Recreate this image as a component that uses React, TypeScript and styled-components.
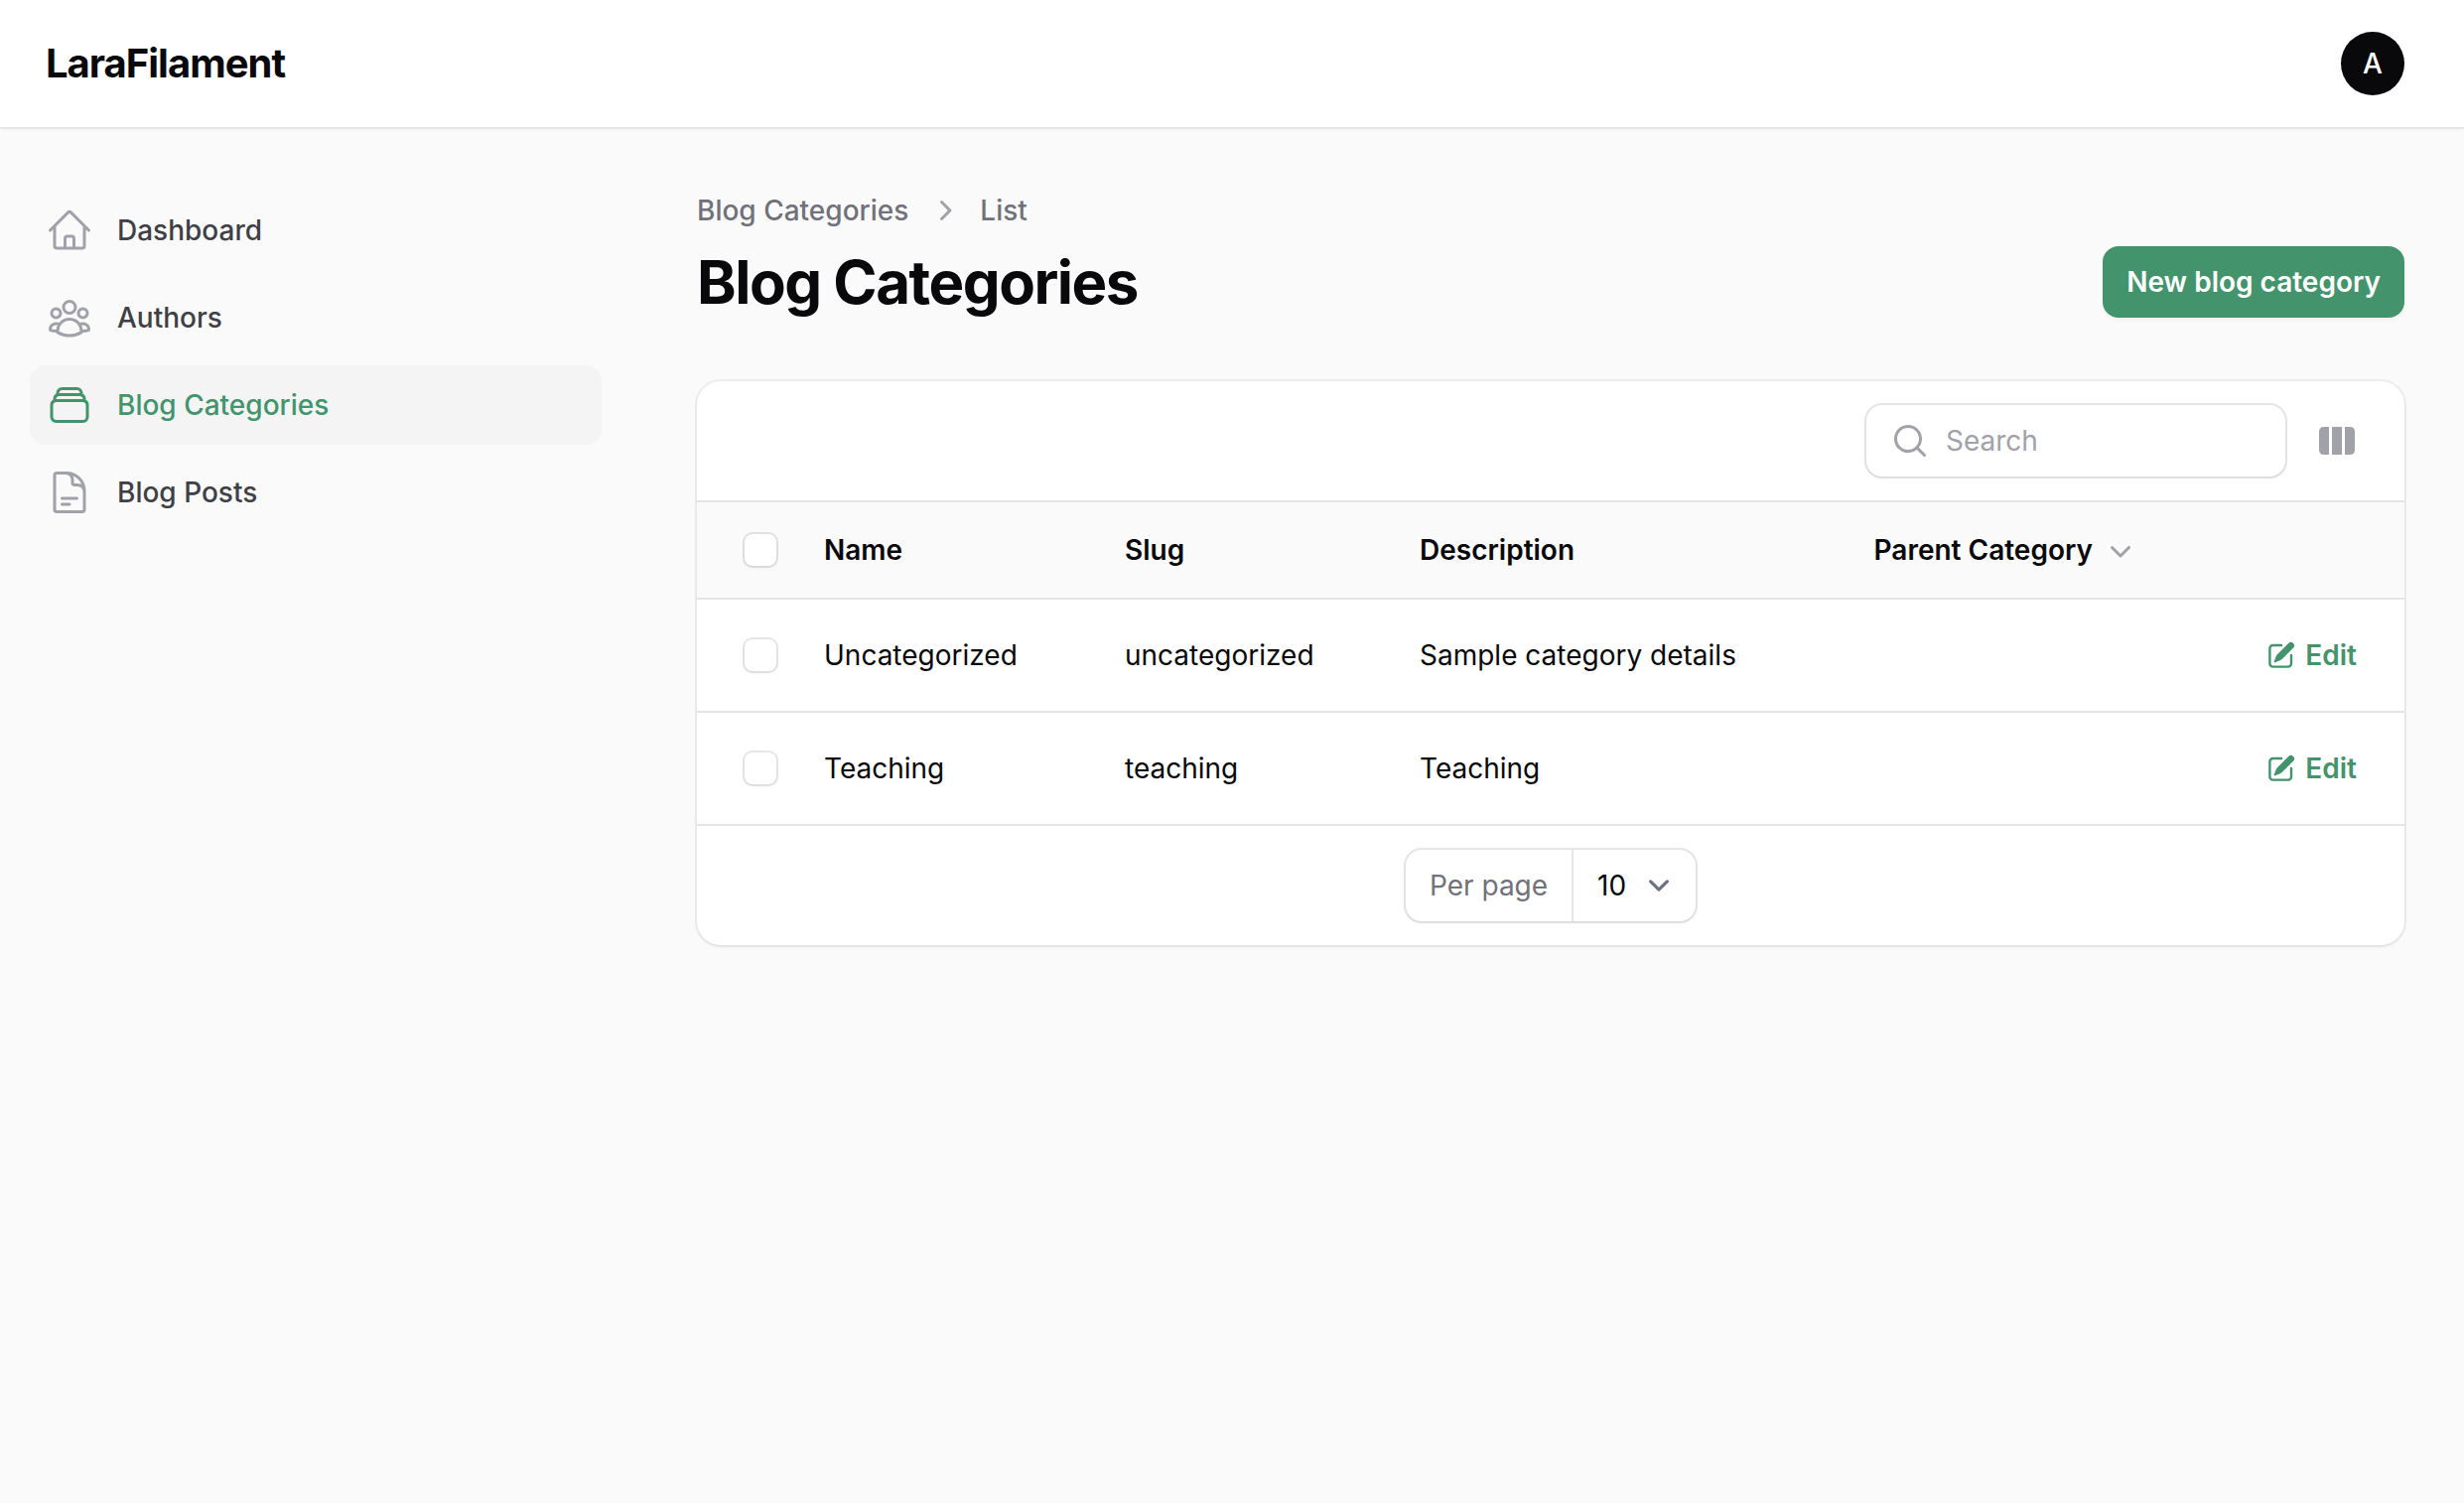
import React from "react";
import styled, { createGlobalStyle, css } from "styled-components";
import {
  HiOutlineHome,
  HiOutlineUserGroup,
  HiOutlineRectangleStack,
  HiOutlineDocumentText,
  HiMiniChevronRight,
  HiMiniChevronDown,
  HiMiniMagnifyingGlass,
  HiMiniViewColumns,
  HiMiniPencilSquare,
} from "react-icons/hi2";

const color = {
  primary: "#43936c",
  ink: "#09090b",
  text: "#3f3f46",
  muted: "#71717a",
  faint: "#a1a1aa",
  line: "#e4e4e5",
  page: "#fafafa",
  active: "#f4f4f4",
};

const smallShadow = "0 2px 4px 0 rgba(0, 0, 0, 0.05)";
const ring = (alpha: number) => `0 0 0 2px rgba(9, 9, 11, ${alpha})`;

const GlobalStyle = createGlobalStyle`
  *, *::before, *::after { box-sizing: border-box; }
  body {
    margin: 0;
    background: ${color.page};
    color: ${color.ink};
    font-family: Inter, "Liberation Sans", sans-serif;
    font-size: 28px;
    line-height: 40px;
    -webkit-font-smoothing: antialiased;
  }
  svg { display: block; flex-shrink: 0; }
  button, input { font: inherit; border: 0; padding: 0; margin: 0; background: none; }
`;

const Page = styled.div`
  display: flex;
  flex-direction: column;
  height: 1514px;
  overflow: hidden;
`;

const Topbar = styled.header`
  display: flex;
  align-items: center;
  justify-content: space-between;
  height: 128px;
  flex-shrink: 0;
  padding: 0 60px 0 46px;
  background: #fff;
  box-shadow: ${ring(0.05)}, ${smallShadow};
`;

const Brand = styled.div`
  font-size: 40px;
  line-height: 40px;
  font-weight: 700;
  letter-spacing: -0.025em;
`;

const Avatar = styled.div`
  display: flex;
  align-items: center;
  justify-content: center;
  width: 64px;
  height: 64px;
  border-radius: 50%;
  background: ${color.ink};
  color: #fff;
  font-weight: 500;
`;

const Body = styled.div`
  display: flex;
  flex: 1;
`;

const Sidebar = styled.nav`
  display: flex;
  flex-direction: column;
  gap: 8px;
  width: 638px;
  flex-shrink: 0;
  padding: 64px 32px 64px 30px;
`;

const NavItem = styled.a<{ $active?: boolean }>`
  display: flex;
  align-items: center;
  gap: 24px;
  height: 80px;
  padding: 16px;
  border-radius: 16px;
  font-weight: 500;
  color: ${color.text};
  svg {
    width: 48px;
    height: 48px;
    color: ${color.faint};
  }
  ${(p) =>
    p.$active &&
    css`
      background: ${color.active};
      color: ${color.primary};
      svg {
        color: ${color.primary};
      }
    `}
`;

const Main = styled.main`
  display: flex;
  flex-direction: column;
  gap: 64px;
  flex: 1;
  padding: 64px 60px 64px 64px;
`;

const PageHeader = styled.div`
  display: flex;
  align-items: flex-end;
  justify-content: space-between;
`;

const Breadcrumbs = styled.div`
  display: flex;
  align-items: center;
  gap: 16px;
  margin-bottom: 16px;
  font-weight: 500;
  color: ${color.muted};
  svg {
    width: 40px;
    height: 40px;
    color: ${color.faint};
  }
`;

const Title = styled.h1`
  margin: 0;
  font-size: 60px;
  line-height: 72px;
  font-weight: 700;
  letter-spacing: -0.025em;
`;

const PrimaryButton = styled.button`
  height: 72px;
  padding: 0 24px;
  border-radius: 16px;
  background: ${color.primary};
  color: #fff;
  font-weight: 600;
  box-shadow: ${smallShadow};
`;

const Card = styled.section`
  border-radius: 24px;
  background: #fff;
  box-shadow: ${ring(0.05)}, ${smallShadow};
`;

const Toolbar = styled.div`
  display: flex;
  align-items: center;
  justify-content: flex-end;
  gap: 32px;
  height: 120px;
  padding: 24px 48px;
  color: ${color.faint};
  > svg {
    width: 40px;
    height: 40px;
  }
`;

const SearchBox = styled.label`
  display: flex;
  align-items: center;
  gap: 16px;
  width: 422px;
  height: 72px;
  padding-left: 24px;
  border-radius: 16px;
  box-shadow: ${ring(0.1)}, ${smallShadow};
  svg {
    width: 40px;
    height: 40px;
  }
`;

const SearchInput = styled.input`
  flex: 1;
  min-width: 0;
  outline: none;
  &::placeholder {
    color: ${color.faint};
    opacity: 1;
  }
`;

const Row = styled.div<{ $head?: boolean }>`
  display: grid;
  grid-template-columns: 104px 303px 297px 457.5px 1fr;
  align-items: center;
  height: ${(p) => (p.$head ? 98 : 114)}px;
  border-top: 2px solid ${color.line};
  background: ${(p) => (p.$head ? color.page : "transparent")};
  font-weight: ${(p) => (p.$head ? 600 : 400)};
`;

const Cell = styled.div`
  display: flex;
  align-items: center;
  gap: 8px;
  padding-left: 24px;
  white-space: nowrap;
  svg {
    width: 40px;
    height: 40px;
    color: ${color.faint};
  }
`;

const CheckCell = styled.div`
  padding-left: 48px;
`;

const Checkbox = styled.div`
  width: 32px;
  height: 32px;
  border-radius: 8px;
  background: #fff;
  box-shadow: ${ring(0.1)}, ${smallShadow};
`;

const EditCell = styled.div`
  display: flex;
  justify-content: flex-end;
  padding-right: 48px;
`;

const EditLink = styled.a`
  display: flex;
  align-items: center;
  gap: 8px;
  font-weight: 600;
  color: ${color.primary};
  svg {
    width: 32px;
    height: 32px;
  }
`;

const Footer = styled.div`
  display: flex;
  align-items: center;
  justify-content: center;
  height: 122px;
  border-top: 2px solid ${color.line};
`;

const PerPage = styled.div`
  display: flex;
  width: 292px;
  height: 72px;
  border-radius: 16px;
  box-shadow: ${ring(0.1)}, ${smallShadow};
`;

const PerPageLabel = styled.div`
  display: flex;
  align-items: center;
  width: 169px;
  padding-left: 24px;
  border-right: 2px solid ${color.line};
  color: ${color.muted};
`;

const PerPageValue = styled.div`
  display: flex;
  align-items: center;
  justify-content: space-between;
  flex: 1;
  padding: 0 16px 0 24px;
`;

const Caret = () => (
  <svg width="42" height="42" viewBox="0 0 20 20" fill="none">
    <path d="M6 8l4 4 4-4" stroke="#6b7280" strokeWidth="1.5" strokeLinecap="round" strokeLinejoin="round" />
  </svg>
);

const navItems = [
  { label: "Dashboard", Icon: HiOutlineHome },
  { label: "Authors", Icon: HiOutlineUserGroup },
  { label: "Blog Categories", Icon: HiOutlineRectangleStack, active: true },
  { label: "Blog Posts", Icon: HiOutlineDocumentText },
];

const categories = [
  { name: "Uncategorized", slug: "uncategorized", description: "Sample category details" },
  { name: "Teaching", slug: "teaching", description: "Teaching" },
];

export default function App() {
  return (
    <Page>
      <GlobalStyle />
      <Topbar>
        <Brand>LaraFilament</Brand>
        <Avatar>A</Avatar>
      </Topbar>
      <Body>
        <Sidebar>
          {navItems.map(({ label, Icon, active }) => (
            <NavItem key={label} $active={active}>
              <Icon />
              {label}
            </NavItem>
          ))}
        </Sidebar>
        <Main>
          <PageHeader>
            <div>
              <Breadcrumbs>
                <span>Blog Categories</span>
                <HiMiniChevronRight />
                <span>List</span>
              </Breadcrumbs>
              <Title>Blog Categories</Title>
            </div>
            <PrimaryButton>New blog category</PrimaryButton>
          </PageHeader>
          <Card>
            <Toolbar>
              <SearchBox>
                <HiMiniMagnifyingGlass />
                <SearchInput placeholder="Search" />
              </SearchBox>
              <HiMiniViewColumns />
            </Toolbar>
            <Row $head>
              <CheckCell>
                <Checkbox />
              </CheckCell>
              <Cell>Name</Cell>
              <Cell>Slug</Cell>
              <Cell>Description</Cell>
              <Cell>
                Parent Category
                <HiMiniChevronDown />
              </Cell>
            </Row>
            {categories.map((c) => (
              <Row key={c.slug}>
                <CheckCell>
                  <Checkbox />
                </CheckCell>
                <Cell>{c.name}</Cell>
                <Cell>{c.slug}</Cell>
                <Cell>{c.description}</Cell>
                <EditCell>
                  <EditLink>
                    <HiMiniPencilSquare />
                    Edit
                  </EditLink>
                </EditCell>
              </Row>
            ))}
            <Footer>
              <PerPage>
                <PerPageLabel>Per page</PerPageLabel>
                <PerPageValue>
                  10
                  <Caret />
                </PerPageValue>
              </PerPage>
            </Footer>
          </Card>
        </Main>
      </Body>
    </Page>
  );
}
